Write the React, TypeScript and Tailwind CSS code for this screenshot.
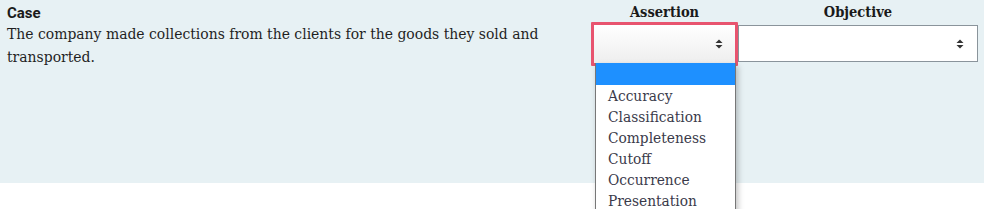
const options = ['Accuracy', 'Classification', 'Completeness', 'Cutoff', 'Occurrence', 'Presentation']

function Arrows() {
  return (
    <svg width="8" height="10" viewBox="0 0 8 10" className="text-[#333]">
      <path d="M4 0.5 L7.5 4 H0.5 Z" fill="currentColor" />
      <path d="M4 9.5 L7.5 6 H0.5 Z" fill="currentColor" />
    </svg>
  )
}

function App() {
  const slab = { fontFamily: "'DejaVu Serif Condensed', 'DejaVu Serif', serif" }
  return (
    <div className="w-[984px] h-[209px] overflow-hidden bg-white">
      <div className="bg-[#e7f1f4] h-[183px] pl-[7px]">
        <div className="grid grid-cols-[584px_147px_240px]">
          <div className="pt-[2px] h-[22px] text-[15px] font-bold text-[#1a1a1a]" style={{ fontFamily: 'Roboto, sans-serif' }}>
            Case
          </div>
          <div className="pt-[1px] h-[22px] text-center text-[14.5px] font-bold text-[#1a1a1a]" style={slab}>
            Assertion
          </div>
          <div className="pt-[1px] h-[22px] text-center text-[14.5px] font-bold text-[#1a1a1a]" style={slab}>
            Objective
          </div>

          <div className="pt-[1px] pr-6 text-[15.5px] leading-[23px] text-[#1f1f1f]" style={slab}>
            The company made collections from the clients for the goods they sold and transported.
          </div>
          <div className="relative">
            <div className="h-[44px] border-[3px] border-[#e8546f] rounded-[1px] bg-gradient-to-b from-white to-[#eeeeee] flex items-center justify-end pr-[12px]">
              <Arrows />
            </div>
            <div className="absolute left-[4px] top-[41px] w-[141px] bg-white border border-[#777] border-t-0 shadow-[2px_3px_6px_rgba(0,0,0,0.25)] text-[15.3px] leading-[21px] text-[#3a3a4a]" style={slab}>
              <div className="h-[22px] bg-[#1e90ff] mb-[1px]" />
              {options.map(o => (
                <div key={o} className="pl-[12px] whitespace-nowrap">{o}</div>
              ))}
            </div>
          </div>
          <div className="pt-[3px]">
            <div className="h-[37px] border border-[#8a949b] bg-white flex items-center justify-end pr-[13px]">
              <Arrows />
            </div>
          </div>
        </div>
      </div>
    </div>
  )
}

export default App
